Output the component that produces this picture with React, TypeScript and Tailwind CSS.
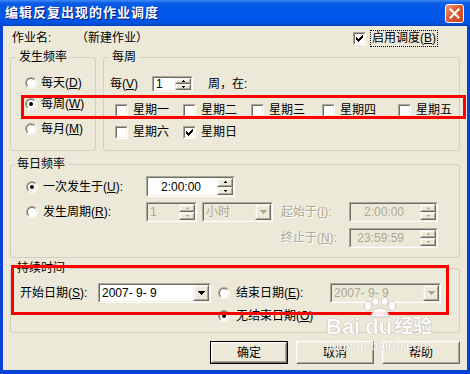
import React from 'react';

const dis = 'text-[#ACA899] [text-shadow:1px_1px_0_#fff]';

function Radio({ checked = false }: { checked?: boolean }) {
  return (
    <span className="block w-[12px] h-[12px] shrink-0 rounded-full border border-t-[#ACA899] border-l-[#ACA899] border-r-white border-b-white">
      <span className="flex items-center justify-center w-full h-full rounded-full border border-t-[#716F64] border-l-[#716F64] border-r-[#F1EFE2] border-b-[#F1EFE2] bg-white">
        {checked && <span className="block w-[4px] h-[4px] rounded-full bg-black" />}
      </span>
    </span>
  );
}

function Check({ checked = false }: { checked?: boolean }) {
  return (
    <span className="block w-[13px] h-[13px] shrink-0 border border-t-[#ACA899] border-l-[#ACA899] border-r-white border-b-white">
      <span className="flex items-center justify-center w-full h-full border border-t-[#716F64] border-l-[#716F64] border-r-[#F1EFE2] border-b-[#F1EFE2] bg-white">
        {checked && (
          <svg width="7" height="7" viewBox="0 0 7 7" shapeRendering="crispEdges">
            <path d="M6 0h1v3h-1zM5 1h1v3h-1zM4 2h1v3h-1zM3 3h1v3h-1zM2 4h1v3h-1zM1 3h1v3h-1zM0 2h1v3h-1z" fill="#000" />
          </svg>
        )}
      </span>
    </span>
  );
}

function Sunken({ className = '', disabled = false, children }: { className?: string; disabled?: boolean; children?: React.ReactNode }) {
  return (
    <div className={`shrink-0 border border-t-[#ACA899] border-l-[#ACA899] border-r-white border-b-white ${className}`}>
      <div className={`flex w-full h-full border border-t-[#716F64] border-l-[#716F64] border-r-[#F1EFE2] border-b-[#F1EFE2] ${disabled ? 'bg-[#ECE9D8]' : 'bg-white'}`}>
        {children}
      </div>
    </div>
  );
}

function Raised({ className = '', children }: { className?: string; children?: React.ReactNode }) {
  return (
    <div className={`border border-t-[#F1EFE2] border-l-[#F1EFE2] border-r-[#716F64] border-b-[#716F64] ${className}`}>
      <div className="flex items-center justify-center w-full h-full border border-t-white border-l-white border-r-[#ACA899] border-b-[#ACA899] bg-[#ECE9D8]">
        {children}
      </div>
    </div>
  );
}

function Arrow({ up = false, disabled = false }: { up?: boolean; disabled?: boolean }) {
  return (
    <svg width="3" height="2" viewBox="0 0 3 2" shapeRendering="crispEdges">
      <path d={up ? 'M1 0h1v1h-1zM0 1h3v1h-3z' : 'M0 0h3v1h-3zM1 1h1v1h-1z'} fill={disabled ? '#ACA899' : '#000'} />
    </svg>
  );
}

function DownArrow({ disabled = false }: { disabled?: boolean }) {
  return (
    <svg width="7" height="4" viewBox="0 0 7 4" shapeRendering="crispEdges">
      <path d="M0 0h7v1h-7zM1 1h5v1h-5zM2 2h3v1h-3zM3 3h1v1h-1z" fill={disabled ? '#ACA899' : '#000'} />
    </svg>
  );
}

function Spin({ disabled = false }: { disabled?: boolean }) {
  return (
    <div className="flex flex-col w-[16px] h-full shrink-0">
      <Raised className="flex-1">
        <Arrow up disabled={disabled} />
      </Raised>
      <Raised className="flex-1">
        <Arrow disabled={disabled} />
      </Raised>
    </div>
  );
}

function TimeBox({ value, disabled = false, className = '' }: { value: string; disabled?: boolean; className?: string }) {
  return (
    <Sunken className={className} disabled={disabled}>
      <div className={`flex-1 flex items-center justify-end pr-[16px] ${disabled ? 'text-[#ACA899]' : ''}`}>{value}</div>
      <Spin disabled={disabled} />
    </Sunken>
  );
}

function Combo({ value, disabled = false, className = '' }: { value: string; disabled?: boolean; className?: string }) {
  return (
    <Sunken className={className} disabled={disabled}>
      <div className={`flex-1 flex items-center pl-[2px] whitespace-pre ${disabled ? 'text-[#ACA899]' : ''}`}>{value}</div>
      <Raised className="w-[16px] h-full shrink-0">
        <DownArrow disabled={disabled} />
      </Raised>
    </Sunken>
  );
}

function Btn({ children, primary = false }: { children: React.ReactNode; primary?: boolean }) {
  const face = (
    <div className="h-full border border-t-white border-l-white border-r-[#716F64] border-b-[#716F64]">
      <div className="flex items-center justify-center h-full border border-t-[#F1EFE2] border-l-[#F1EFE2] border-r-[#ACA899] border-b-[#ACA899] bg-[#ECE9D8]">
        {children}
      </div>
    </div>
  );
  return primary ? (
    <div className="w-[78px] h-[23px] border border-black">{face}</div>
  ) : (
    <div className="w-[78px] h-[23px]">{face}</div>
  );
}

const days1 = ['星期一', '星期二', '星期三', '星期四', '星期五'];

export default function App() {
  return (
    <div className="relative w-[470px] h-[374px] flex flex-col bg-[#0842D6] font-['Liberation_Sans','Noto_Sans_CJK_SC',sans-serif] text-[12px] leading-[14px] text-black overflow-hidden">
      {/* title bar */}
      <div className="h-[26px] shrink-0 flex items-center pl-[5px] pr-[6px] bg-[linear-gradient(to_bottom,#3D8CF6_0%,#0A5CE6_12%,#0055E5_45%,#0058EC_75%,#0050DA_92%,#0040B8_100%)]">
        <span className="flex-1 text-white font-bold text-[13px] tracking-[1px] [text-shadow:1px_1px_0_#0A1883]">编辑反复出现的作业调度</span>
        <div className="w-[19px] h-[19px] rounded-[3px] border border-white bg-[linear-gradient(135deg,#EE9A7C_0%,#E0592F_45%,#C8401A_100%)] flex items-center justify-center">
          <svg width="11" height="11" viewBox="0 0 11 11">
            <path d="M1.5 1.5L9.5 9.5M9.5 1.5L1.5 9.5" stroke="#fff" strokeWidth="2.2" strokeLinecap="square" />
          </svg>
        </div>
      </div>

      {/* body */}
      <div className="flex-1 mx-[3px] mb-[4px] bg-[#ECE9D8] px-[7px] pt-[2px] flex flex-col">
        <div className="h-[20px] flex items-center">
          <span className="ml-[2px] w-[64px]">作业名:</span>
          <span>（新建作业）</span>
          <div className="ml-auto mr-[22px] flex items-center gap-[4px]">
            <Check checked />
            <span className="border border-dotted border-black px-[1px] leading-[15px]">
              启用调度(<u>B</u>)
            </span>
          </div>
        </div>

        <div className="mt-[2px] flex gap-[7px]">
          <fieldset className="w-[86px] h-[101px] m-0 p-0 min-w-0 border border-[#D0D0BF] rounded-[3px]">
            <legend className="ml-[5px] px-[3px] leading-[14px]">发生频率</legend>
            <div className="pl-[14px] pt-[12px] flex flex-col">
              <div className="h-[14px] flex items-center gap-[4px]">
                <Radio />
                <span>每天(<u>D</u>)</span>
              </div>
              <div className="mt-[7px] h-[14px] flex items-center gap-[4px]">
                <Radio checked />
                <span>每周(<u>W</u>)</span>
              </div>
              <div className="mt-[11px] h-[14px] flex items-center gap-[4px]">
                <Radio />
                <span>每月(<u>M</u>)</span>
              </div>
            </div>
          </fieldset>

          <fieldset className="flex-1 h-[101px] m-0 p-0 min-w-0 border border-[#D0D0BF] rounded-[3px]">
            <legend className="ml-[5px] px-[3px] leading-[14px]">每周</legend>
            <div className="pl-[6px] pt-[12px] flex flex-col">
              <div className="h-[16px] flex items-center">
                <span className="w-[42px]">每(<u>V</u>)</span>
                <Sunken className="w-[41px] h-[16px]">
                  <div className="flex-1 flex items-center pl-[2px]">1</div>
                  <Spin />
                </Sunken>
                <span className="ml-[15px]">周，在:</span>
              </div>
              <div className="mt-[11px] pl-[5px] h-[13px] grid grid-cols-[68px_68px_71px_76px_1fr]">
                {days1.map((d) => (
                  <div key={d} className="flex items-center gap-[5px]">
                    <Check />
                    <span>{d}</span>
                  </div>
                ))}
              </div>
              <div className="mt-[9px] pl-[5px] h-[13px] grid grid-cols-[68px_68px_71px_76px_1fr]">
                <div className="flex items-center gap-[5px]">
                  <Check />
                  <span>星期六</span>
                </div>
                <div className="flex items-center gap-[5px]">
                  <Check checked />
                  <span>星期日</span>
                </div>
              </div>
            </div>
          </fieldset>
        </div>

        <fieldset className="mt-[6px] h-[101px] m-0 p-0 min-w-0 border border-[#D0D0BF] rounded-[3px]">
          <legend className="ml-[3px] px-[3px] leading-[14px]">每日频率</legend>
          <div className="pl-[15px] pt-[5px] flex flex-col">
            <div className="h-[21px] flex items-center">
              <div className="w-[120px] flex items-center gap-[5px]">
                <Radio checked />
                <span>一次发生于(<u>U</u>):</span>
              </div>
              <TimeBox value="2:00:00" className="w-[89px] h-[21px]" />
            </div>
            <div className="mt-[5px] h-[20px] flex items-center">
              <div className="w-[120px] flex items-center gap-[5px]">
                <Radio />
                <span>发生周期(<u>R</u>):</span>
              </div>
              <Sunken className="w-[51px] h-[20px]" disabled>
                <div className="flex-1 flex items-center pl-[2px] text-[#ACA899]">1</div>
                <Spin disabled />
              </Sunken>
              <Combo value="小时" disabled className="ml-[5px] w-[71px] h-[20px]" />
              <span className={`ml-[8px] w-[68px] ${dis}`}>起始于(<u>I</u>):</span>
              <TimeBox value="2:00:00" disabled className="w-[89px] h-[20px]" />
            </div>
            <div className="mt-[6px] h-[20px] flex items-center">
              <span className={`ml-[255px] w-[68px] ${dis}`}>终止于(<u>N</u>):</span>
              <TimeBox value="23:59:59" disabled className="w-[89px] h-[20px]" />
            </div>
          </div>
        </fieldset>

        <fieldset className="mt-[3px] h-[72px] m-0 p-0 min-w-0 border border-[#D0D0BF] rounded-[3px]">
          <legend className="ml-[3px] px-[3px] leading-[14px]">持续时间</legend>
          <div className="pl-[9px] pt-[8px] flex flex-col">
            <div className="h-[20px] flex items-center">
              <span className="w-[78px]">开始日期(<u>S</u>):</span>
              <Combo value="2007- 9- 9" className="w-[113px] h-[20px]" />
              <div className="ml-[7px] w-[112px] flex items-center gap-[6px]">
                <Radio />
                <span>结束日期(<u>E</u>):</span>
              </div>
              <Combo value="2007- 9- 9" disabled className="w-[111px] h-[20px]" />
            </div>
            <div className="mt-[6px] ml-[198px] h-[14px] flex items-center gap-[6px]">
              <Radio checked />
              <span>无结束日期(<u>O</u>)</span>
            </div>
          </div>
        </fieldset>

        <div className="mt-[8px] flex justify-end gap-[8px]">
          <Btn primary>确定</Btn>
          <Btn>取消</Btn>
          <Btn>帮助</Btn>
        </div>
      </div>

      {/* annotation boxes */}
      <div className="absolute left-[21px] top-[95px] w-[445px] h-[24px] border-[3px] border-[#FF0000] pointer-events-none" />
      <div className="absolute left-[11px] top-[265px] w-[438px] h-[50px] border-[3px] border-[#FF0000] pointer-events-none" />

      {/* watermark */}
      <div className="absolute left-[326px] top-[297px] pointer-events-none opacity-90 text-white">
        <svg className="ml-[36px]" width="36" height="21" viewBox="0 0 36 21">
          <g fill="#fff" stroke="#C8C8C8" strokeWidth="1">
            <ellipse cx="6" cy="9" rx="3.5" ry="4.5" />
            <ellipse cx="13.5" cy="4.5" rx="3.5" ry="4" />
            <ellipse cx="22.5" cy="4.5" rx="3.5" ry="4" />
            <ellipse cx="30" cy="9" rx="3.5" ry="4.5" />
            <path d="M9 20C10 13 14 11 18 11C22 11 26 13 27 20Z" />
          </g>
        </svg>
        <div className="flex items-end leading-[18px] font-bold [text-shadow:0_0_1px_#999,0_0_1px_#999]">
          <span className="text-[22px] font-['Liberation_Sans',sans-serif]">Bai</span>
          <span className="ml-[5px] text-[22px] font-['Liberation_Sans',sans-serif]">du</span>
          <span className="ml-[2px] text-[19px]">经验</span>
        </div>
        <div className="mt-[4px] text-[13px] leading-[12px] [text-shadow:0_0_1px_#999]">jingyan.baidu.com</div>
      </div>
    </div>
  );
}
